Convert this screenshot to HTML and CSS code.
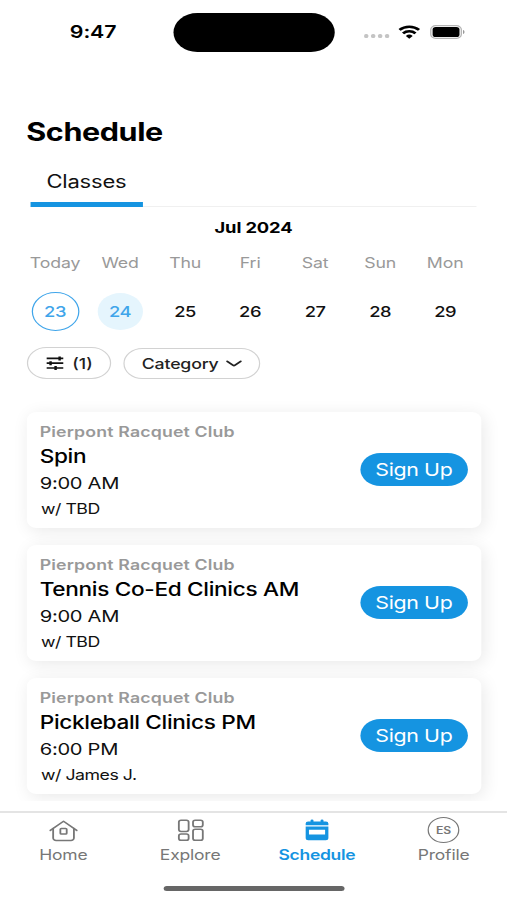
FILE: index.html
```html
<!DOCTYPE html>
<html lang="en">
<head>
    <meta charset="UTF-8">
    <meta name="viewport" content="width=device-width, initial-scale=1.0">
    <title>Schedule</title>
    <link rel="stylesheet" href="styles.css">
</head>
<body>
    <div class="phone">
        <header class="status-bar">
            <span class="time">9:47</span>
            <div class="island"></div>
            <div class="status-icons">
                <svg class="dots" width="21" height="4" viewBox="0 0 21 4" fill="#c4c4c4">
                    <rect x="0" y="0" width="3.5" height="4" rx="1.5"/>
                    <rect x="5.7" y="0" width="3.5" height="4" rx="1.5"/>
                    <rect x="11.4" y="0" width="3.5" height="4" rx="1.5"/>
                    <rect x="17.1" y="0" width="3.5" height="4" rx="1.5"/>
                </svg>
                <svg class="wifi" width="18" height="14" viewBox="0 0 18 14" fill="none" stroke="#000" stroke-width="2.5">
                    <path d="M1 4.9a11.6 11.6 0 0 1 16 0"/>
                    <path d="M3.9 8.3a7.4 7.4 0 0 1 10.2 0"/>
                    <path d="M9 13.8L6.2 10.9a4 4 0 0 1 5.6 0z" fill="#000" stroke="none"/>
                </svg>
                <svg class="battery" width="29" height="14" viewBox="0 0 29 14">
                    <rect x=".6" y=".6" width="25" height="12.8" rx="4" fill="none" stroke="#b5b5b5" stroke-width="1.1"/>
                    <rect x="2.1" y="2" width="22" height="10" rx="2.6"/>
                    <path d="M27 5c1.6.6 1.6 3.4 0 4z" fill="#999"/>
                </svg>
            </div>
        </header>

        <h1>Schedule</h1>
        <nav class="tabs">
            <a class="tab">Classes</a>
        </nav>

        <div class="month">Jul 2024</div>
        <div class="week">
            <div class="day"><span class="name">Today</span><span class="num today">23</span></div>
            <div class="day"><span class="name">Wed</span><span class="num selected">24</span></div>
            <div class="day"><span class="name">Thu</span><span class="num">25</span></div>
            <div class="day"><span class="name">Fri</span><span class="num">26</span></div>
            <div class="day"><span class="name">Sat</span><span class="num">27</span></div>
            <div class="day"><span class="name">Sun</span><span class="num">28</span></div>
            <div class="day"><span class="name">Mon</span><span class="num">29</span></div>
        </div>

        <div class="filters">
            <button class="pill filter">
                <svg width="14" height="14" viewBox="0 0 14 14" fill="none" stroke="#111" stroke-width="1.7">
                    <path d="M0 2.4h14M0 7.2h14M0 12h14"/>
                    <path d="M10.8.4v4M3.4 5.2v4M7.5 10v4" stroke-width="2"/>
                </svg>
                <span>(1)</span>
            </button>
            <button class="pill category">
                <span>Category</span>
                <svg width="13" height="8" viewBox="0 0 13 8" fill="none" stroke="#222" stroke-width="1.7" stroke-linecap="round" stroke-linejoin="round">
                    <path d="M1 2.3l4.6 3.9a1.4 1.4 0 0 0 1.8 0L12 2.3"/>
                </svg>
            </button>
        </div>

        <main class="list">
            <div class="card">
                <div class="info">
                    <div class="club">Pierpont Racquet Club</div>
                    <div class="title">Spin</div>
                    <div class="hour">9:00 AM</div>
                    <div class="coach">w/ TBD</div>
                </div>
                <button class="signup">Sign Up</button>
            </div>
            <div class="card">
                <div class="info">
                    <div class="club">Pierpont Racquet Club</div>
                    <div class="title">Tennis Co-Ed Clinics AM</div>
                    <div class="hour">9:00 AM</div>
                    <div class="coach">w/ TBD</div>
                </div>
                <button class="signup">Sign Up</button>
            </div>
            <div class="card">
                <div class="info">
                    <div class="club">Pierpont Racquet Club</div>
                    <div class="title">Pickleball Clinics PM</div>
                    <div class="hour">6:00 PM</div>
                    <div class="coach">w/ James J.</div>
                </div>
                <button class="signup">Sign Up</button>
            </div>
        </main>

        <footer class="bottom-nav">
            <a class="nav-item">
                <svg width="24" height="26" viewBox="0 0 24 26" fill="none" stroke="#777" stroke-width="1.5" stroke-linecap="round" stroke-linejoin="round">
                    <path d="M1.2 13.4L12 4.2l10.8 9.2"/>
                    <path d="M3.5 11.6V21a2.4 2.4 0 0 0 2.4 2.4h12.2a2.4 2.4 0 0 0 2.4-2.4v-9.4"/>
                    <rect x="9.4" y="11.4" width="5.2" height="5.6" rx=".8"/>
                </svg>
                <span>Home</span>
            </a>
            <a class="nav-item">
                <svg width="24" height="26" viewBox="0 0 24 26" fill="none" stroke="#777" stroke-width="1.5">
                    <rect x="2.4" y="3.2" width="8" height="11.2" rx="1.8"/>
                    <rect x="14" y="3.2" width="8" height="6.5" rx="1.8"/>
                    <rect x="2.4" y="17" width="8" height="6.2" rx="1.8"/>
                    <rect x="14" y="12.2" width="8" height="11" rx="1.8"/>
                </svg>
                <span>Explore</span>
            </a>
            <a class="nav-item active">
                <svg width="24" height="26" viewBox="0 0 24 26" fill="#1594e1">
                    <path d="M5.2 4.4h2V3.6a1.2 1.2 0 0 1 2.4 0v.8h5.8v-.8a1.2 1.2 0 0 1 2.4 0v.8h2a2 2 0 0 1 2 2v1.9H3.2V6.4a2 2 0 0 1 2-2z"/>
                    <path fill-rule="evenodd" d="M3.2 9.4h18.6v11.9a2 2 0 0 1-2 2H5.2a2 2 0 0 1-2-2zM5.9 12.8v4.8h13.2v-4.8z"/>
                </svg>
                <span>Schedule</span>
            </a>
            <a class="nav-item">
                <div class="avatar">ES</div>
                <span>Profile</span>
            </a>
        </footer>
        <div class="home-indicator"></div>
    </div>
</body>
</html>
```
FILE: styles.css
```css
* {
    box-sizing: border-box;
}
body {
    margin: 0;
    background: #fff;
    overflow: hidden;
    font-family: Inter, "Liberation Sans", sans-serif;
}
/* 415px phone layout, widened to fill the window */
.phone {
    width: 415px;
    height: 900px;
    display: flex;
    flex-direction: column;
    transform: scaleX(1.2217);
    transform-origin: 0 0;
    color: #111;
}
.status-bar {
    height: 64px;
    flex: none;
    display: grid;
    grid-template-columns: 141.5px 132.5px 1fr;
    align-items: center;
}
.time {
    padding: 0 0 1px 11px;
    text-align: center;
    font-size: 17.5px;
    font-weight: 600;
    letter-spacing: -0.1px;
    color: #000;
}
.island {
    height: 39px;
    border-radius: 20px;
    background: #000;
}
.status-icons {
    display: flex;
    align-items: center;
    padding-left: 24px;
}
.dots {
    margin-top: 8px;
}
.wifi {
    margin-left: 6.5px;
}
.battery {
    margin-left: 8.5px;
}
h1 {
    margin: 52px 0 0 21.5px;
    font-size: 25px;
    line-height: 32px;
    font-weight: 700;
    color: #000;
    letter-spacing: -0.35px;
}
.tabs {
    display: flex;
    height: 59px;
    margin: 0 25px;
    border-bottom: 1px solid #f0f0f0;
}
.tab {
    height: 58.5px;
    width: 91.5px;
    padding-top: 22.5px;
    text-align: center;
    font-size: 18px;
    line-height: 22px;
    letter-spacing: -0.15px;
    border-bottom: 5px solid #1594e1;
}
.month {
    margin-top: 11px;
    text-align: center;
    font-size: 15px;
    line-height: 20px;
    font-weight: 700;
    letter-spacing: -0.1px;
    color: #000;
}
.week {
    display: flex;
    margin: 15px 24px 0 18.5px;
}
.day {
    flex: 1;
    display: flex;
    flex-direction: column;
    align-items: center;
}
.name {
    font-size: 14.5px;
    line-height: 20px;
    letter-spacing: -0.1px;
    color: #999;
}
.num {
    display: flex;
    align-items: center;
    justify-content: center;
    width: 39px;
    height: 39px;
    margin-top: 19px;
    border-radius: 50%;
    font-size: 15px;
    font-weight: 500;
    letter-spacing: -0.3px;
}
.num.today {
    border: 1.2px solid #3fa5ea;
    color: #3fa5ea;
}
.num.selected {
    width: 37.5px;
    height: 37px;
    margin-top: 20px;
    background: #e5f5fd;
    color: #3fa5ea;
}
.filters {
    display: flex;
    align-items: center;
    gap: 10.5px;
    margin: 16px 0 0 21.5px;
}
.pill {
    display: flex;
    align-items: center;
    justify-content: center;
    height: 32px;
    padding: 0;
    border: 1px solid #d2d2d2;
    border-radius: 16px;
    background: #fff;
    font-family: inherit;
    font-size: 14.5px;
    font-weight: 500;
    color: #222;
}
.filter {
    width: 69px;
    gap: 7px;
    padding-left: 2px;
}
.category {
    width: 112px;
    height: 31px;
    gap: 6px;
    letter-spacing: -0.15px;
}
.list {
    flex: none;
    height: 422px;
    overflow: hidden;
    padding: 32.5px 21.5px 0;
    display: flex;
    flex-direction: column;
    gap: 17px;
}
.card {
    flex: none;
    height: 116px;
    display: flex;
    align-items: center;
    justify-content: space-between;
    padding: 0 10.5px 0 11px;
    border-radius: 8px;
    background: #fff;
    box-shadow: 2px 3px 15px rgba(0, 0, 0, 0.09);
}
.info {
    padding-top: 1px;
    white-space: nowrap;
}
.club {
    font-size: 14.5px;
    line-height: 23px;
    font-weight: 600;
    letter-spacing: 0.13px;
    color: #999;
}
.title {
    font-size: 18.5px;
    line-height: 27px;
    font-weight: 500;
    letter-spacing: -0.27px;
    color: #000;
}
.hour {
    font-size: 16.5px;
    line-height: 27px;
    letter-spacing: -0.25px;
}
.coach {
    padding-left: 1px;
    font-size: 14.5px;
    line-height: 24px;
    letter-spacing: -0.38px;
}
.signup {
    width: 88.5px;
    height: 33px;
    padding: 0;
    border: none;
    border-radius: 17px;
    background: #1594e1;
    color: #fff;
    font-family: inherit;
    font-size: 17.5px;
    letter-spacing: -0.3px;
}
.bottom-nav {
    display: grid;
    grid-template-columns: repeat(4, 1fr);
    margin-top: 10px;
    border-top: 2px solid #e4e4e4;
    height: 75px;
}
.nav-item {
    display: flex;
    flex-direction: column;
    align-items: center;
    padding-top: 4px;
    font-size: 14.3px;
    line-height: 20px;
    letter-spacing: -0.15px;
    color: #777;
}
.nav-item svg,
.avatar {
    margin-bottom: 2px;
}
.nav-item.active {
    color: #1594e1;
    font-weight: 600;
    letter-spacing: -0.25px;
}
.avatar {
    width: 26px;
    height: 26px;
    border: 1px solid #777;
    border-radius: 50%;
    text-align: center;
    font-size: 10px;
    line-height: 24px;
    font-weight: 600;
    letter-spacing: 0;
}
.home-indicator {
    width: 147.5px;
    height: 5px;
    margin-left: 134px;
    border-radius: 3px;
    background: #666;
}
```
